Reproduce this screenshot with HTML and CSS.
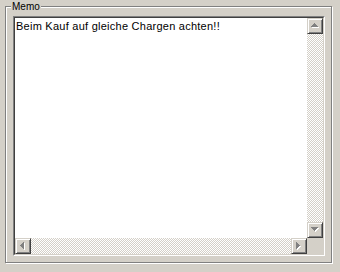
FILE: index.html
```html
<!DOCTYPE html>
<html>
<head>
<meta charset="utf-8">
<link rel="stylesheet" href="styles.css">
</head>
<body>
<div class="group">
  <span class="legend">Memo</span>
  <div class="edit">
    <div class="client">
      <div class="main">
        <div class="text">Beim Kauf auf gleiche Chargen achten!!</div>
        <div class="vscroll">
          <div class="btn"><svg width="9" height="6" viewBox="0 0 9 6"><path class="hl" d="M4 1h1v1h1v1h1v1h1v1H1V4h1V3h1V2h1z"/><path class="ar" d="M3 0h1v1h1v1h1v1h1v1H0V3h1V2h1V1h1z"/></svg></div>
          <div class="track"></div>
          <div class="btn"><svg width="9" height="6" viewBox="0 0 9 6"><path class="hl" d="M1 1h7v1H7v1H6v1H5v1H4V4H3V3H2V2H1z"/><path class="ar" d="M0 0h7v1H6v1H5v1H4v1H3V3H2V2H1V1H0z"/></svg></div>
        </div>
      </div>
      <div class="bottom">
        <div class="hscroll">
          <div class="btn"><svg width="6" height="9" viewBox="0 0 6 9"><path class="hl" d="M4 1h1v7H4V7H3V6H2V5H1V4h1V3h1V2h1z"/><path class="ar" d="M3 0h1v7H3V6H2V5H1V4H0V3h1V2h1V1h1z"/></svg></div>
          <div class="track"></div>
          <div class="btn"><svg width="6" height="9" viewBox="0 0 6 9"><path class="hl" d="M1 1h1v1h1v1h1v1h1v1H4v1H3v1H2v1H1z"/><path class="ar" d="M0 0h1v1h1v1h1v1h1v1H3v1H2v1H1v1H0z"/></svg></div>
        </div>
        <div class="corner"></div>
      </div>
    </div>
  </div>
</div>
</body>
</html>
```
FILE: styles.css
```css
html, body {
  margin: 0;
  padding: 0;
}
body {
  width: 340px;
  height: 272px;
  overflow: hidden;
  background: #d4d0c8;
  font-family: "Liberation Sans", Arial, sans-serif;
  font-size: 11px;
  color: #000;
}
.group {
  position: relative;
  box-sizing: border-box;
  margin: 6px 0 0 5px;
  width: 327px;
  height: 257px;
  border: 1px solid #808080;
  box-shadow: inset 1px 1px 0 #fff, 1px 1px 0 #fff;
  padding: 9px 0 0 7px;
}
.legend {
  position: absolute;
  left: 5px;
  top: -6px;
  padding: 0 1px;
  background: #d4d0c8;
  font-size: 10px;
  line-height: 12px;
}
.edit {
  box-sizing: border-box;
  width: 312px;
  height: 240px;
  border: 1px solid;
  border-color: #808080 #fff #fff #808080;
}
.client {
  box-sizing: border-box;
  height: 100%;
  border: 1px solid;
  border-color: #404040 #d4d0c8 #d4d0c8 #404040;
  display: flex;
  flex-direction: column;
}
.main {
  flex: 1;
  display: flex;
  min-height: 0;
}
.text {
  flex: 1;
  background: #fff;
  padding: 2px 1px;
  line-height: 13px;
  letter-spacing: 0.25px;
  white-space: nowrap;
}
.vscroll {
  width: 16px;
  display: flex;
  flex-direction: column;
}
.bottom {
  height: 16px;
  display: flex;
}
.hscroll {
  flex: 1;
  display: flex;
}
.corner {
  width: 16px;
  background: #d4d0c8;
}
.track {
  flex: 1;
  background: repeating-conic-gradient(#fff 0 25%, #d4d0c8 0 50%) 0 0 / 2px 2px;
}
.btn {
  box-sizing: border-box;
  width: 16px;
  height: 16px;
  flex: none;
  background: #d4d0c8;
  border: 1px solid;
  border-color: #d4d0c8 #404040 #404040 #d4d0c8;
  box-shadow: inset 1px 1px 0 #fff, inset -1px -1px 0 #808080;
  display: flex;
  align-items: center;
  justify-content: center;
}
.btn svg {
  display: block;
}
.ar { fill: #808080; }
.hl { fill: #fff; }
```
